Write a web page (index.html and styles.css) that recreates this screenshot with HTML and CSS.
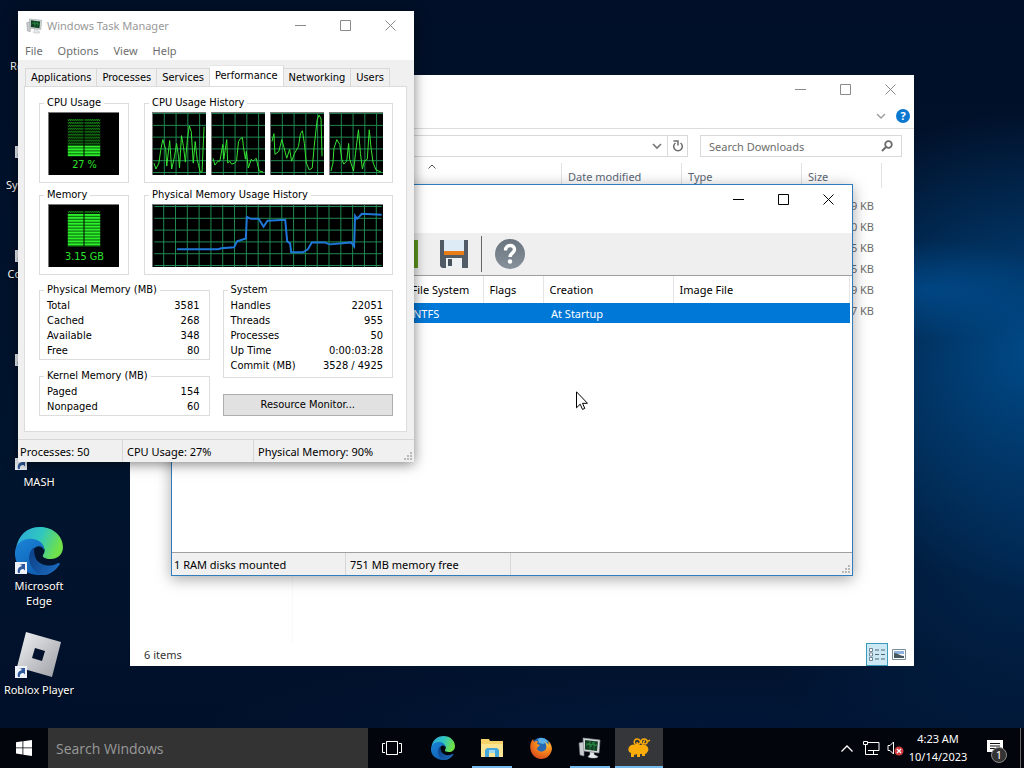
FILE: index.html
```html
<!DOCTYPE html>
<html lang="en">
<head>
<meta charset="utf-8">
<meta name="viewport" content="width=device-width, initial-scale=1">
<title>Desktop</title>
<link rel="stylesheet" href="styles.css">
</head>
<body>
<svg class="defs" width="0" height="0" aria-hidden="true">
  <defs>
    <linearGradient id="edge-top" x1="0" y1="0" x2="1" y2="0.3"><stop offset="0" stop-color="#2fa6dc"/><stop offset="0.55" stop-color="#2fc6c0"/><stop offset="1" stop-color="#6fe04a"/></linearGradient>
    <linearGradient id="edge-body" x1="0" y1="0" x2="0.6" y2="1"><stop offset="0" stop-color="#1b86d8"/><stop offset="1" stop-color="#0f5fb4"/></linearGradient>
    <linearGradient id="edge-low" x1="0" y1="0" x2="1" y2="0.5"><stop offset="0" stop-color="#0d3f86"/><stop offset="1" stop-color="#1a66b8"/></linearGradient>
    <linearGradient id="silver" x1="0" y1="0" x2="1" y2="1"><stop offset="0" stop-color="#f2f3f5"/><stop offset="1" stop-color="#9a9da3"/></linearGradient>
    <linearGradient id="slate" x1="0" y1="0" x2="0" y2="1"><stop offset="0" stop-color="#6a747e"/><stop offset="1" stop-color="#87919b"/></linearGradient>
    <radialGradient id="fox" cx="0.7" cy="0.2" r="0.9"><stop offset="0" stop-color="#ffd54a"/><stop offset="0.45" stop-color="#f58a1e"/><stop offset="1" stop-color="#d8431a"/></radialGradient>
    <pattern id="grid-a" x="0" y="0" width="12" height="12" patternUnits="userSpaceOnUse"><path d="M11.5 0V12M0 .5H12" stroke="#1f8a50" stroke-width="1"/></pattern>
    <pattern id="grid-b" x="9" y="0" width="12" height="12" patternUnits="userSpaceOnUse"><path d="M.5 0V12M0 1.5H12" stroke="#1f8a50" stroke-width="1"/></pattern>
    <pattern id="led-on" width="33" height="3" patternUnits="userSpaceOnUse"><rect width="33" height="2" fill="#2cf02c"/><rect y="2" width="33" height="1" fill="#0a5a0a"/></pattern>
    <pattern id="led-off" width="2" height="3" patternUnits="userSpaceOnUse"><rect width="1" height="1" fill="#1fc41f"/><rect x="1" y="1" width="1" height="1" fill="#1fc41f"/></pattern>
    <symbol id="edge" viewBox="0 0 48 48">
      <path d="M1 22C3 8 12 0 25 0c14 0 23 10 23 20 0 8-6 12-12 12-6 0-9-2-8-4 2-3 2-5 1-7C26 13 8 11 1 22z" fill="url(#edge-top)"/>
      <path d="M0 25C1 14 11 11 18 12c7 1 12 6 11 11-1-3-5-5-8-3-5 3-8 12-1 20 3 4 7 7 11 8C12 50-1 40 0 25z" fill="url(#edge-body)"/>
      <path d="M19 20c-7 6-6 17 0 23 3 3 6 5 12 5 6-2 11-6 14-11 0-1-1-1-2-1-9 5-18 2-22-4-2-4-2-8-2-12z" fill="url(#edge-low)"/>
    </symbol>
    <symbol id="shortcut" viewBox="0 0 12 12"><rect width="12" height="12" fill="#eef2f8"/><path d="M3 11C2 7 4 4.500 6.500 4.500V2.500L3.500 2H10v6.500L8.500 7C6 7 4.500 8 5 11z" fill="#2c5a9c"/></symbol>
    <symbol id="taskmgr" viewBox="0 0 24 22">
      <path d="M1 6l5-1v14l-4-1z" fill="#c9cdd0" stroke="#7c8286" stroke-width=".6"/>
      <path d="M5 1l17 2-1 13-15-2z" fill="#d5dadd" stroke="#8a9094" stroke-width=".7"/>
      <path d="M7 3l13 1.500-1 9.500-12-1.500z" fill="#123f23"/>
      <path d="M8 9l3-3 2 4 2-5 2 4 2-1M8 7l11 1M12 4v9M16 4v9" fill="none" stroke="#2c9a4c" stroke-width=".6"/>
      <path d="M12 15l4 .6v2l4 2c0 2-9 2-10 0l2-2z" fill="#e6e9eb" stroke="#9ba1a5" stroke-width=".5"/>
    </symbol>
    <symbol id="ctl-min" viewBox="0 0 11 11"><path d="M0 5.500H11" stroke="currentColor"/></symbol>
    <symbol id="ctl-max" viewBox="0 0 11 11"><path d="M.5.5h10v10H.5z" fill="none" stroke="currentColor"/></symbol>
    <symbol id="ctl-close" viewBox="0 0 11 11"><path d="M.5.5l10 10M10.500.5l-10 10" fill="none" stroke="currentColor"/></symbol>
    <symbol id="grip" viewBox="0 0 9 9"><path d="M6 0h2v2H6zM3 3h2v2H3zM6 3h2v2H6zM0 6h2v2H0zM3 6h2v2H3zM6 6h2v2H6z" fill="#b8b8b8"/></symbol>
  </defs>
</svg>

<main class="desktop">
  <ul class="icons">
    <li class="icon"><a href="#"><svg class="icon-art" viewBox="0 0 48 48"><path d="M10 4h28l-4 42H14z" fill="#cdd8e4"/></svg><span>Recycle Bin</span></a></li>
    <li class="icon"><a href="#"><svg class="icon-art" viewBox="0 0 48 48"><path d="M6 10h14l4 4h18v28H6z" fill="#f2cf6b"/><use href="#shortcut" y="35" width="12" height="12"/></svg><span>My<br>System Apps</span></a></li>
    <li class="icon"><a href="#"><svg class="icon-art" viewBox="0 0 48 48"><path d="M3 34h40v6H3z" fill="#8e9aac"/><use href="#shortcut" y="35" width="12" height="12"/></svg><span>Command 1</span></a></li>
    <li class="icon"><a href="#"><svg class="icon-art" viewBox="0 0 48 48"><use href="#shortcut" y="35" width="12" height="12"/></svg></a></li>
    <li class="icon"><a href="#"><svg class="icon-art" viewBox="0 0 48 48"><use href="#shortcut" y="35" width="12" height="12"/></svg><span>MASH</span></a></li>
    <li class="icon"><a href="#"><svg class="icon-art" viewBox="0 0 48 48"><use href="#edge" width="48" height="48"/><use href="#shortcut" y="35" width="12" height="12"/></svg><span>Microsoft<br>Edge</span></a></li>
    <li class="icon"><a href="#"><svg class="icon-art" viewBox="0 0 48 48"><path fill="url(#silver)" fill-rule="evenodd" d="M11 1l35 10-9 35L2 36zM20 17l-3 10 10 3 3-10z"/><use href="#shortcut" y="35" width="12" height="12"/></svg><span>Roblox Player</span></a></li>
  </ul>

  <section class="window explorer" aria-label="Downloads">
    <header class="titlebar">
      <div class="controls muted">
        <button aria-label="Minimize"><svg><use href="#ctl-min"/></svg></button>
        <button aria-label="Maximize"><svg><use href="#ctl-max"/></svg></button>
        <button aria-label="Close"><svg><use href="#ctl-close"/></svg></button>
      </div>
    </header>
    <div class="ribbon">
      <button class="bare" aria-label="Expand the ribbon"><svg width="10" height="6" viewBox="0 0 10 6"><path d="M1 1l4 4 4-4" fill="none" stroke="#9a9a9a" stroke-width="1.300"/></svg></button>
      <button class="bare help" aria-label="Help">?</button>
    </div>
    <div class="address-row">
      <div class="address">
        <button class="bare" aria-label="Previous locations"><svg width="10" height="7" viewBox="0 0 10 7"><path d="M1 1l4 4 4-4" fill="none" stroke="#777" stroke-width="1.700"/></svg></button>
        <button class="bare refresh" aria-label="Refresh"><svg width="12" height="12" viewBox="0 0 12 12"><path d="M3.500 3A4.300 4.300 0 1 0 8.500 3" fill="none" stroke="#6b6b6b" stroke-width="1.500"/><path d="M1.500 1h4.500v4.500" fill="none" stroke="#6b6b6b" stroke-width="1.500"/></svg></button>
      </div>
      <label class="search-box"><input type="search" placeholder="Search Downloads" aria-label="Search Downloads"><svg width="12" height="12" viewBox="0 0 12 12"><circle cx="7.500" cy="4.500" r="3.300" fill="none" stroke="#6b6b6b" stroke-width="1.800"/><path d="M5 7L1 11" stroke="#6b6b6b" stroke-width="2"/></svg></label>
    </div>
    <div class="explorer-body">
      <nav class="nav-pane" aria-label="Folders"></nav>
      <table class="files">
        <colgroup><col class="c-name"><col class="c-date"><col class="c-type"><col class="c-size"></colgroup>
        <thead><tr><th class="sorted" aria-label="Name"><svg width="8" height="5" viewBox="0 0 8 5"><path d="M.5 4.500L4 1l3.500 3.500" fill="none" stroke="#555"/></svg></th><th>Date modified</th><th>Type</th><th>Size</th></tr></thead>
        <tbody>
          <tr><td></td><td></td><td></td><td>9 KB</td></tr>
          <tr><td></td><td></td><td></td><td>0 KB</td></tr>
          <tr><td></td><td></td><td></td><td>5 KB</td></tr>
          <tr><td></td><td></td><td></td><td>5 KB</td></tr>
          <tr><td></td><td></td><td></td><td>9 KB</td></tr>
          <tr><td></td><td></td><td></td><td>7 KB</td></tr>
        </tbody>
      </table>
    </div>
    <footer class="explorer-status">
      <span>6 items</span>
      <div class="views">
        <button class="bare view on" aria-label="Details view"><svg width="16" height="13" viewBox="0 0 16 13"><path d="M.5.5h3v3h-3zM.5 5h3v3h-3zM.5 9.500h3v3h-3z" fill="#fff" stroke="#6d8797"/><path d="M6 2h4M12 2h4M6 6.500h4M12 6.500h4M6 11h4M12 11h4" stroke="#4f6673"/></svg></button>
        <button class="bare view" aria-label="Large icons view"><svg width="14" height="11" viewBox="0 0 14 11"><path d="M.5.5h13v10H.5z" fill="#fff" stroke="#7b8d99"/><path d="M2 2h10v3H2z" fill="#8fb2dc"/><path d="M2 4c4 0 6 3 10 3v2H2z" fill="#46585e"/></svg></button>
      </div>
    </footer>
  </section>

  <section class="window ram" aria-label="RAM disk">
    <header class="titlebar">
      <div class="controls">
        <button aria-label="Minimize"><svg><use href="#ctl-min"/></svg></button>
        <button aria-label="Maximize"><svg><use href="#ctl-max"/></svg></button>
        <button aria-label="Close"><svg><use href="#ctl-close"/></svg></button>
      </div>
    </header>
    <div class="toolbar">
      <button class="bare" aria-label="Mount"><svg width="28" height="28" viewBox="0 0 28 28"><path d="M0 0h28v28H0z" fill="#5d9a1f"/></svg></button>
      <button class="bare" aria-label="Save"><svg width="28" height="28" viewBox="0 0 28 28"><path d="M0 0h28v28H2l-2-2z" fill="#505b66"/><path d="M4 0h20v11H4z" fill="#dcebf5"/><path d="M4 11h20v4H4z" fill="#ea7c17"/><path d="M6 18h16v10H6z" fill="#eef1f3"/><path d="M8 19h4v7H8z" fill="#48525c"/></svg></button>
      <span class="divider"></span>
      <button class="bare" aria-label="About"><svg width="30" height="30" viewBox="0 0 30 30"><circle cx="15" cy="15" r="15" fill="url(#slate)"/><path d="M10.500 11.500c0-6.500 9-6.500 9-1 0 3.700-4.500 3.500-4.500 7.500" fill="none" stroke="#fff" stroke-width="3.400"/><circle cx="15" cy="22.500" r="2.200" fill="#fff"/></svg></button>
    </div>
    <table class="disks">
      <colgroup><col class="d-lead"><col class="d-fs"><col class="d-flags"><col class="d-creation"><col></colgroup>
      <thead><tr><th></th><th>File System</th><th>Flags</th><th>Creation</th><th>Image File</th></tr></thead>
      <tbody><tr><td></td><td>NTFS</td><td></td><td>At Startup</td><td></td></tr></tbody>
    </table>
    <footer class="statusbar ram-status"><span>1 RAM disks mounted</span><span>751 MB memory free</span><svg class="grip" width="9" height="9"><use href="#grip"/></svg></footer>
  </section>

  <section class="window taskman" aria-label="Windows Task Manager">
    <header class="titlebar">
      <svg class="app-icon" width="17" height="16"><use href="#taskmgr"/></svg>
      <h1>Windows Task Manager</h1>
      <div class="controls muted">
        <button aria-label="Minimize"><svg><use href="#ctl-min"/></svg></button>
        <button aria-label="Maximize"><svg><use href="#ctl-max"/></svg></button>
        <button aria-label="Close"><svg><use href="#ctl-close"/></svg></button>
      </div>
    </header>
    <nav class="menubar"><button>File</button><button>Options</button><button>View</button><button>Help</button></nav>
    <div class="tabs" role="tablist">
      <button role="tab">Applications</button><button role="tab">Processes</button><button role="tab">Services</button><button role="tab" aria-selected="true" class="selected">Performance</button><button role="tab">Networking</button><button role="tab">Users</button>
    </div>
    <div class="panel" role="tabpanel">
      <div class="charts">
        <fieldset><legend>CPU Usage</legend>
          <svg class="meter" width="71" height="63" viewBox="0 0 71 63"><rect x="19" y="6" width="33" height="27" fill="url(#led-off)"/><rect x="19" y="33" width="33" height="11" fill="url(#led-on)"/><path d="M35.500 6V45" stroke="#000"/><text x="36" y="56" text-anchor="middle">27 %</text></svg>
        </fieldset>
        <fieldset><legend>CPU Usage History</legend>
          <div class="cores">
            <svg width="54" height="63" viewBox="0 0 54 63"><rect width="54" height="63" fill="url(#grid-a)"/><polyline points="1,51 3,57 6,51 8,37 10,27 13,37 14,54 17,28 19,57 22,44 24,31 26,44 27,56 29,23 31,34 33,50 35,27 37,13 39,19 41,51 43,29 45,47 48,60 50,60 52,14"/></svg>
            <svg width="54" height="63" viewBox="0 0 54 63"><rect width="54" height="63" fill="url(#grid-a)"/><polyline points="1,46 3,53 6,49 8,49 11,32 12,47 15,27 16,51 18,49 20,52 23,51 25,49 27,29 29,26 31,25 32,34 34,47 35,39 37,56 40,47 42,49 45,46 48,59 52,60"/></svg>
            <svg width="54" height="63" viewBox="0 0 54 63"><rect width="54" height="63" fill="url(#grid-a)"/><polyline points="1,29 3,21 4,42 8,39 11,27 13,34 16,46 19,37 21,49 24,41 28,34 30,21 32,18 34,31 36,51 39,58 42,56 44,34 47,7 49,2 51,6 52,44"/></svg>
            <svg width="54" height="63" viewBox="0 0 54 63"><rect width="54" height="63" fill="url(#grid-a)"/><polyline points="1,59 3,51 4,36 7,27 10,32 12,47 14,52 17,49 19,31 20,47 24,59 26,41 29,17 31,41 33,57 35,49 38,47 40,17 42,37 44,51 47,58 52,60"/></svg>
          </div>
        </fieldset>
        <fieldset><legend>Memory</legend>
          <svg class="meter" width="71" height="63" viewBox="0 0 71 63"><rect x="19" y="6" width="33" height="3" fill="url(#led-off)"/><rect x="19" y="9" width="33" height="33" fill="url(#led-on)"/><path d="M35.500 6V42" stroke="#000"/><text x="36" y="56" text-anchor="middle">3.15 GB</text></svg>
        </fieldset>
        <fieldset><legend>Physical Memory Usage History</legend>
          <svg class="memory-graph" width="231" height="63" viewBox="0 0 231 63"><rect width="231" height="63" fill="url(#grid-b)"/><polyline points="23,45 65,45 68,44 81,43 84,37 93,34 94,12 98,14 106,14 111,22 115,16 133,15 135,37 138,39 139,48 151,48 156,45 160,38 173,38 178,40 200,38 203,42 204,11 206,14 211,9 231,10"/></svg>
        </fieldset>
      </div>
      <div class="figures">
        <div class="figures-col">
          <fieldset><legend>Physical Memory (MB)</legend>
            <dl><dt>Total</dt><dd>3581</dd><dt>Cached</dt><dd>268</dd><dt>Available</dt><dd>348</dd><dt>Free</dt><dd>80</dd></dl>
          </fieldset>
          <fieldset><legend>Kernel Memory (MB)</legend>
            <dl><dt>Paged</dt><dd>154</dd><dt>Nonpaged</dt><dd>60</dd></dl>
          </fieldset>
        </div>
        <div class="figures-col">
          <fieldset class="system"><legend>System</legend>
            <dl><dt>Handles</dt><dd>22051</dd><dt>Threads</dt><dd>955</dd><dt>Processes</dt><dd>50</dd><dt>Up Time</dt><dd>0:00:03:28</dd><dt>Commit (MB)</dt><dd>3528 / 4925</dd></dl>
          </fieldset>
          <button class="push">Resource Monitor...</button>
        </div>
      </div>
    </div>
    <footer class="statusbar taskman-status"><span>Processes: 50</span><span>CPU Usage: 27%</span><span>Physical Memory: 90%</span><svg class="grip" width="9" height="9"><use href="#grip"/></svg></footer>
  </section>

  <svg class="cursor" width="12" height="19" viewBox="0 0 12 19" aria-hidden="true"><path d="M.5.8v16l3.700-3.600 2.300 5.200 2.300-1-2.300-5.100h5z" fill="#fff" stroke="#000"/></svg>
</main>

<footer class="taskbar">
  <button class="start" aria-label="Start"><svg width="16" height="16" viewBox="0 0 16 16"><path d="M0 2.200l6.500-.9v6.200H0zM7.300 1.200L16 0v7.500H7.300zM0 8.300h6.500v6.200L0 13.600zM7.300 8.300H16V16l-8.700-1.300z" fill="#fff"/></svg></button>
  <input class="task-search" type="search" placeholder="Search Windows" aria-label="Search Windows">
  <button class="start" aria-label="Task View"><svg width="20" height="14" viewBox="0 0 20 14"><path d="M4.500.5h11v13h-11zM3 2.500H.5v9H3M17 2.500h2.500v9H17" fill="none" stroke="#fff"/></svg></button>
  <div class="apps">
    <button aria-label="Microsoft Edge"><svg width="24" height="24"><use href="#edge"/></svg></button>
    <button class="running" aria-label="File Explorer"><svg width="22" height="20" viewBox="0 0 22 20"><path d="M0 1h8l1 2h13v16H0z" fill="#f6d36b"/><path d="M0 6h22v13H0z" fill="#fde493"/><path d="M4 19v-7l2-2h10l2 2v7h-4v-4H8v4z" fill="#45a6dc"/><path d="M8 12h6v3H8z" fill="#9ed7f3"/></svg></button>
    <button aria-label="Firefox"><svg width="22" height="22" viewBox="0 0 22 22"><circle cx="11" cy="10" r="9.500" fill="#2568b4"/><path d="M8 2c3-2 8-1 10 3l-5 2-4-1z" fill="#5bb0e6"/><path d="M1 5l2-3 1 3c1-1 3-1 4-1L7 7l3 1-3 3c0 4 6 5 9 1 1-3 0-5-1-7 2 1 3 2 4 3l-1-4c3 2 4 6 4 8-1 6-5 10-11 10C4 22-2 14 1 5z" fill="url(#fox)"/></svg></button>
    <button class="running" aria-label="Windows Task Manager"><svg width="24" height="22"><use href="#taskmgr"/></svg></button>
    <button class="running active" aria-label="RAM disk"><svg width="24" height="20" viewBox="0 0 24 20"><path d="M2 9c2-3 5-3 8-2h8c3 1 4 4 3 6-1 2-2 3-3 3v2h-3v-2h-2v3h-3v-3l-3 1v2H4v-4C1 14 1 11 2 9z" fill="#f9ac0a"/><path d="M12 7C6 8 6 1 10 1c3 0 4 3 3 4-1 2-3 1-3-1M16 7c-3-3-2-6 1-6 4 0 4 5 1 5-2 0-2-3 0-3M20 4l3-2" fill="none" stroke="#f9ac0a" stroke-width="1.500"/></svg></button>
  </div>
  <div class="tray">
    <button aria-label="Show hidden icons"><svg width="12" height="7" viewBox="0 0 12 7"><path d="M.5 6.500L6 1l5.500 5.500" fill="none" stroke="#fff" stroke-width="1.300"/></svg></button>
    <button aria-label="Network"><svg width="17" height="14" viewBox="0 0 17 14"><path d="M5 1.500h11v8H5M.5.5h4v3h-4zM2.500 4v9.500H7M10.500 10v3M6 13.500h9" fill="none" stroke="#fff"/></svg></button>
    <button aria-label="Volume muted"><svg width="17" height="15" viewBox="0 0 17 15"><path d="M1 4.500h2L6.500 1v12L3 9.500H1z" fill="none" stroke="#fff"/><circle cx="12" cy="10" r="4.500" fill="#d03a3f"/><path d="M10 8l4 4M14 8l-4 4" stroke="#fff" stroke-width="1.200"/></svg></button>
    <button class="clock"><time datetime="2023-10-14T04:23">4:23 AM<br>10/14/2023</time></button>
    <button class="notify" aria-label="Notifications"><svg width="16" height="16" viewBox="0 0 16 16"><path d="M0 0h16v12H9l-4 4v-4H0z" fill="#fff"/><path d="M3 3.500h10M3 6h10M3 8.500h7" stroke="#111"/></svg><span class="badge">1</span></button>
  </div>
</footer>
</body>
</html>
```
FILE: styles.css
```css
* { box-sizing: border-box; }

body {
  margin: 0;
  height: 100vh;
  display: flex;
  flex-direction: column;
  overflow: hidden;
  font: 11px/15px "Noto Sans", "Open Sans", sans-serif;
  color: #000;
}

button, input { font: inherit; color: inherit; }
button { margin: 0; padding: 0; border: 0; background: none; border-radius: 0; }
ul, dl, dd, h1 { margin: 0; padding: 0; font-weight: inherit; font-size: inherit; }
svg { display: block; flex: none; }
.defs { position: absolute; }

/* Desktop */
.desktop {
  position: relative;
  flex: 1;
  min-height: 0;
  overflow: hidden;
  background:
    radial-gradient(ellipse 130px 50px at 930px 290px, rgba(0, 84, 156, .6), transparent),
    radial-gradient(ellipse 280px 240px at 1040px 350px, rgba(0, 88, 160, .8), transparent),
    radial-gradient(ellipse 300px 240px at 1040px 560px, rgba(0, 50, 100, .6), transparent),
    radial-gradient(ellipse 500px 80px at 700px 728px, rgba(2, 30, 70, .5), transparent),
    linear-gradient(#010f28, #01152f 60%, #01102a);
}

.icons {
  list-style: none;
  display: grid;
  grid-template-columns: 78px;
  grid-auto-rows: 104px;
  padding-top: 7px;
}
.icon a {
  display: flex;
  flex-direction: column;
  align-items: center;
  gap: 3px;
  color: #fff;
  text-align: center;
  text-decoration: none;
  text-shadow: 0 1px 2px #000;
}
.icon-art { width: 48px; height: 48px; }

.cursor { position: absolute; left: 576px; top: 391px; }

/* Windows */
.window {
  position: absolute;
  display: flex;
  flex-direction: column;
  background: #fff;
}
.titlebar { display: flex; align-items: center; height: 29px; }
.titlebar h1 { color: #999; }
.app-icon { margin: 0 4px 0 8px; }
.controls { display: flex; margin-left: auto; padding-right: 1px; }
.controls button { width: 45px; height: 29px; display: grid; place-items: center; }
.controls svg { width: 11px; height: 11px; }
.muted { color: #8a8a8a; }
.bare { display: grid; place-items: center; }

.statusbar {
  display: flex;
  align-items: center;
  height: 23px;
  background: #f0f0f0;
  border-top: 1px solid #d7d7d7;
}
.statusbar span { height: 22px; padding: 4px 4px 0 4px; border-right: 1px solid #d7d7d7; }
.statusbar span:first-child { padding-left: 2px; }
.statusbar .grip { margin: auto 1px 1px auto; }

/* File explorer */
.explorer { left: 130px; right: 110px; top: 75px; bottom: 62px; color: #555; }
.ribbon {
  display: flex;
  justify-content: flex-end;
  align-items: center;
  gap: 10px;
  height: 25px;
  padding-right: 4px;
  border-bottom: 1px solid #dcdcdc;
}
.help {
  width: 14px;
  height: 14px;
  border-radius: 50%;
  background: #0a78d0;
  color: #fff;
  font-weight: bold;
  line-height: 14px;
}
.address-row { display: flex; gap: 12px; padding: 6px 12px 6px 110px; }
.address { flex: 1; display: flex; justify-content: flex-end; height: 22px; border: 1px solid #d9d9d9; }
.address button { width: 20px; }
.address .refresh { border-left: 1px solid #d9d9d9; }
.search-box { display: flex; align-items: center; width: 202px; padding: 0 8px; border: 1px solid #d9d9d9; }
.search-box input { flex: 1; min-width: 0; padding: 0; border: 0; outline: 0; background: none; }
.search-box input::placeholder { color: #6d6d6d; }
.explorer-body { flex: 1; min-height: 0; display: flex; gap: 9px; }
.nav-pane { width: 163px; border-right: 1px solid #f9f9f9; }
.files { table-layout: fixed; width: 580px; border-collapse: separate; border-spacing: 0; height: min-content; }
.c-name { width: 260px; }
.c-date, .c-type { width: 120px; }
.c-size { width: 80px; }
.files th { height: 25px; padding: 2px 0 0 6px; border-right: 1px solid #e3e3e3; font-weight: normal; text-align: left; color: #5b6675; }
.files .sorted { padding: 0; vertical-align: top; }
.sorted svg { margin: 1px auto 0; }
.files td { height: 21px; padding: 0 8px 0 0; text-align: right; color: #6d6d6d; }
.files tbody::before { content: ""; display: block; height: 7px; }
.explorer-status { display: flex; align-items: center; height: 23px; padding: 0 4px 0 14px; color: #333; }
.views { display: flex; margin-left: auto; }
.view { width: 22px; height: 23px; border: 1px solid transparent; }
.view.on { background: #cce8f4; border-color: #3a9cb8; }

/* RAM disk window */
.ram {
  left: 171px;
  right: 171px;
  top: 184px;
  bottom: 152px;
  border: 1px solid #2f7dbd;
  box-shadow: 0 3px 14px rgba(0, 0, 0, .35);
}
.ram .titlebar { height: 48px; align-items: flex-start; }
.toolbar {
  display: flex;
  align-items: center;
  height: 43px;
  padding-left: 218px;
  background: #efefef;
  border-bottom: 1px solid #9f9f9f;
}
.toolbar button:nth-child(2) { margin-left: 22px; }
.divider { width: 1px; height: 36px; margin: 0 13px; background: #666; }
.disks { table-layout: fixed; width: calc(100% - 2px); border-collapse: collapse; }
.d-lead { width: 233px; }
.d-fs { width: 78px; }
.d-flags { width: 60px; }
.d-creation { width: 130px; }
.disks th { height: 27px; padding: 0 0 0 6px; border-right: 1px solid #e5e5e5; font-weight: normal; text-align: left; white-space: nowrap; }
.disks td { height: 20px; padding: 0 0 0 8px; background: #0078d7; color: #fff; }
.ram-status { height: 23px; margin-top: auto; border-color: #9f9f9f; }
.ram-status span:nth-child(1) { width: 174px; }
.ram-status span:nth-child(2) { width: 165px; }

/* Task manager */
.taskman {
  left: 18px;
  top: 11px;
  width: 396px;
  background: #f0f0f0;
  box-shadow: 0 2px 12px rgba(0, 0, 0, .5);
}
.taskman .titlebar { background: #fff; }
.menubar { display: flex; gap: 15px; height: 20px; padding-left: 7px; background: #fff; color: #6d6d6d; }
.tabs, .panel { font-family: "DejaVu Sans Condensed", "DejaVu Sans", sans-serif; line-height: 14px; }
.tabs { display: flex; align-items: flex-end; height: 26px; padding-left: 7px; }
.tabs button { height: 18px; padding: 1px 5px 0; border: 1px solid #d9d9d9; border-width: 1px 1px 0 0; white-space: nowrap; }
.tabs button:first-child { border-left-width: 1px; }
.tabs .selected { height: 21px; padding: 0 5px; background: #fff; border-top-color: #e5e5e5; }
.panel { margin: 0 7px 7px 6px; padding: 9px 13px 15px 14px; background: #fff; border: 1px solid #dcdcdc; }
.charts { display: grid; grid-template-columns: 90px 1fr; gap: 5px 15px; }
.figures { display: grid; grid-template-columns: 1fr 1fr; gap: 13px; margin-top: 8px; }
.figures-col { display: flex; flex-direction: column; gap: 9px; }
fieldset { min-width: 0; margin: 0; padding: 2px 7px 7px; border: 1px solid #dcdcdc; }
legend { margin-left: -3px; padding: 0 3px; height: 14px; }
.meter, .cores svg, .memory-graph { background: #000; border-top: 1px solid #777; border-left: 1px solid #777; }
.meter { margin-left: 1px; }
.meter text { font-size: 11px; fill: #2be32b; }
.cores { display: flex; gap: 5px; }
.cores polyline { fill: none; stroke: #35e835; stroke-width: 1; }
.memory-graph polyline { fill: none; stroke: #1f78d8; stroke-width: 2; }
.figures fieldset { padding-top: 1px; padding-bottom: 1px; }
.figures .system { padding-bottom: 4px; }
dl { display: grid; grid-template-columns: 1fr auto; line-height: 15px; }
dd { padding-right: 2px; text-align: right; }
.push { height: 22px; margin-top: 7px; background: #e1e1e1; border: 1px solid #adadad; }
.taskman-status span:nth-child(1) { width: 105px; }
.taskman-status span:nth-child(2) { width: 131px; }
.taskman-status span:nth-child(3) { border-right: 0; }

/* Taskbar */
.taskbar { display: flex; flex: none; height: 40px; background: #02050b; color: #fff; }
.taskbar button { display: grid; place-items: center; }
.start { width: 48px; }
.task-search { width: 320px; padding: 0 8px; border: 0; outline: 0; border-radius: 0; background: #333; font-family: "Open Sans", sans-serif; font-size: 14px; }
.task-search::placeholder { color: #999; }
.apps { display: flex; gap: 1px; margin-left: 3px; }
.apps button { width: 48px; background-repeat: no-repeat; background-position: bottom; background-size: 40px 2px; }
.apps .running { background-image: linear-gradient(#76b9ed, #76b9ed); }
.apps .active { background-color: #35363a; background-size: 48px 2px; }
.tray { display: flex; margin-left: auto; padding-right: 3px; }
.tray button { width: 24px; }
.tray .clock { width: 62px; line-height: 18px; white-space: nowrap; }
.tray .notify { position: relative; width: 52px; border-right: 1px solid #666; }
.badge {
  position: absolute;
  left: 22px;
  top: 19px;
  width: 16px;
  height: 16px;
  border: 1px solid #888;
  border-radius: 50%;
  background: #333;
  line-height: 14px;
}
```
